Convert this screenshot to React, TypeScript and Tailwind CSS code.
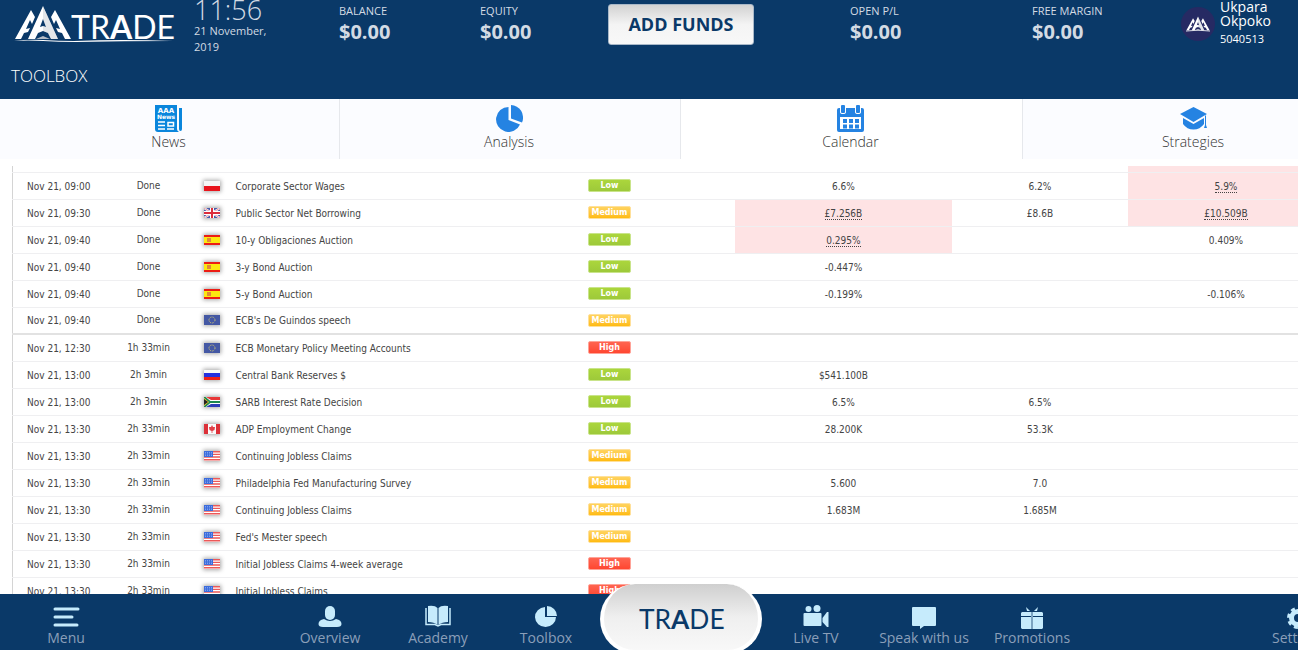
import React from 'react';

type Impact = 'Low' | 'Medium' | 'High';
type Country = 'pl' | 'gb' | 'es' | 'eu' | 'ru' | 'za' | 'ca' | 'us';

interface EventRow {
  time: string;
  status: string;
  country: Country;
  name: string;
  impact: Impact;
  actual?: string;
  consensus?: string;
  previous?: string;
  actualHot?: boolean;
  previousHot?: boolean;
  lastDone?: boolean;
}

const events: EventRow[] = [
  { time: 'Nov 21, 09:00', status: 'Done', country: 'pl', name: 'Corporate Sector Wages', impact: 'Low', actual: '6.6%', consensus: '6.2%', previous: '5.9%', previousHot: true },
  { time: 'Nov 21, 09:30', status: 'Done', country: 'gb', name: 'Public Sector Net Borrowing', impact: 'Medium', actual: '£7.256B', consensus: '£8.6B', previous: '£10.509B', actualHot: true, previousHot: true },
  { time: 'Nov 21, 09:40', status: 'Done', country: 'es', name: '10-y Obligaciones Auction', impact: 'Low', actual: '0.295%', previous: '0.409%', actualHot: true },
  { time: 'Nov 21, 09:40', status: 'Done', country: 'es', name: '3-y Bond Auction', impact: 'Low', actual: '-0.447%' },
  { time: 'Nov 21, 09:40', status: 'Done', country: 'es', name: '5-y Bond Auction', impact: 'Low', actual: '-0.199%', previous: '-0.106%' },
  { time: 'Nov 21, 09:40', status: 'Done', country: 'eu', name: "ECB's De Guindos speech", impact: 'Medium', lastDone: true },
  { time: 'Nov 21, 12:30', status: '1h 33min', country: 'eu', name: 'ECB Monetary Policy Meeting Accounts', impact: 'High' },
  { time: 'Nov 21, 13:00', status: '2h 3min', country: 'ru', name: 'Central Bank Reserves $', impact: 'Low', actual: '$541.100B' },
  { time: 'Nov 21, 13:00', status: '2h 3min', country: 'za', name: 'SARB Interest Rate Decision', impact: 'Low', actual: '6.5%', consensus: '6.5%' },
  { time: 'Nov 21, 13:30', status: '2h 33min', country: 'ca', name: 'ADP Employment Change', impact: 'Low', actual: '28.200K', consensus: '53.3K' },
  { time: 'Nov 21, 13:30', status: '2h 33min', country: 'us', name: 'Continuing Jobless Claims', impact: 'Medium' },
  { time: 'Nov 21, 13:30', status: '2h 33min', country: 'us', name: 'Philadelphia Fed Manufacturing Survey', impact: 'Medium', actual: '5.600', consensus: '7.0' },
  { time: 'Nov 21, 13:30', status: '2h 33min', country: 'us', name: 'Continuing Jobless Claims', impact: 'Medium', actual: '1.683M', consensus: '1.685M' },
  { time: 'Nov 21, 13:30', status: '2h 33min', country: 'us', name: "Fed's Mester speech", impact: 'Medium' },
  { time: 'Nov 21, 13:30', status: '2h 33min', country: 'us', name: 'Initial Jobless Claims 4-week average', impact: 'High' },
  { time: 'Nov 21, 13:30', status: '2h 33min', country: 'us', name: 'Initial Jobless Claims', impact: 'High' },
];

const impactStyles: Record<Impact, string> = {
  Low: 'bg-linear-to-b from-[#abd63c] to-[#9dc93a] border-[#c9e48a]',
  Medium: 'bg-linear-to-b from-[#ffd35c] to-[#ffbb0a] border-[#ffe09a]',
  High: 'bg-linear-to-b from-[#ff6450] to-[#ff4630] border-[#ffa398]',
};

function Peaks() {
  return (
    <g>
      <g fill="#fff">
        <path d="M17 5 L1 34 H7 L10 28 L14 27 L16 23 L12 24 L16 15 L18 19 L21 12 Z" />
        <path d="M41 5 L57 34 H51 L48 28 L44 27 L42 23 L46 24 L42 15 L40 19 L37 12 Z" />
        <path d="M29 1 L14 34 H21 L24 28 L29 26 L34 28 L37 34 H44 Z M29 14 L32 22 L29 21 L26 22 Z" fillRule="evenodd" />
      </g>
      <path d="M29 1 L44 34 H37 L34 28 L29 26 V21 L32 22 L29 14 Z" fill="#8f9aa8" opacity="0.25" />
      <path d="M29 31 L36 34 H22 Z" fill="#b4bcc6" />
    </g>
  );
}

function Wordmark() {
  return (
    <text y="29" fontFamily="Lato, sans-serif" fontSize="32" fill="currentColor">
      TR<tspan fontWeight="700">A</tspan>DE
    </text>
  );
}

function Logo() {
  return (
    <svg viewBox="0 0 164 38" className="h-[38px] w-[164px] overflow-visible text-white" role="img" aria-label="AAA Trade">
      <Peaks />
      <path d="M0 36 Q14 34 29 35 Q44 36 60 36 Q110 34 159 36 Q110 36 62 37 Q44 37 29 36 Q14 35 0 36 Z" fill="#fff" />
      <g transform="translate(57 5)">
        <Wordmark />
      </g>
    </svg>
  );
}

const flags: Record<Country, React.ReactNode> = {
  pl: (
    <>
      <rect width="16" height="10" fill="#f5f5f5" />
      <rect y="5" width="16" height="5" fill="#e8141c" />
    </>
  ),
  gb: (
    <>
      <rect width="16" height="10" fill="#4a5aa8" />
      <path d="M0 0 L16 10 M16 0 L0 10" stroke="#fff" strokeWidth="2" />
      <path d="M0 0 L16 10 M16 0 L0 10" stroke="#d8505c" strokeWidth="0.6" />
      <path d="M8 0 V10 M0 5 H16" stroke="#fff" strokeWidth="4" />
      <path d="M8 0 V10 M0 5 H16" stroke="#dc2c3c" strokeWidth="2" />
    </>
  ),
  es: (
    <>
      <rect width="16" height="10" fill="#ec1c14" />
      <rect y="2" width="16" height="6" fill="#fce810" />
      <rect x="3" y="3" width="4" height="4" fill="#e08838" />
    </>
  ),
  eu: (
    <>
      <rect width="16" height="10" fill="#4458a4" />
      <circle cx="8" cy="5" r="3" fill="none" stroke="#d8cc70" strokeWidth="1" strokeDasharray="1 0.9" />
    </>
  ),
  ru: (
    <>
      <rect width="16" height="10" fill="#f8f8f8" />
      <rect y="3" width="16" height="4" fill="#2430e0" />
      <rect y="7" width="16" height="3" fill="#ee2018" />
    </>
  ),
  za: (
    <>
      <rect width="16" height="10" fill="#fff" />
      <path d="M2 0 H16 V3 H7 Z" fill="#e83838" />
      <path d="M2 10 H16 V7 H7 Z" fill="#2c3cb8" />
      <path d="M0 0 L6 5 L0 10 M5 5 H16" fill="none" stroke="#1c8850" strokeWidth="2" />
      <path d="M0 1 L5 5 L0 9 Z" fill="#e8c020" />
      <path d="M0 2 L4 5 L0 8 Z" fill="#222" />
    </>
  ),
  ca: (
    <>
      <rect width="16" height="10" fill="#fafafa" />
      <rect width="4" height="10" fill="#dc3038" />
      <rect x="12" width="4" height="10" fill="#dc3038" />
      <path d="M8 1 L9 3 L11 3 L10.5 6 L8.4 7 V9 H7.6 V7 L5.5 6 L5 3 L7 3 Z" fill="#e04048" />
    </>
  ),
  us: (
    <>
      <rect width="16" height="10" fill="#fff" />
      <path d="M0 0.8 H16 M0 3.4 H16 M0 6 H16 M0 8.8 H16" stroke="#ec5858" strokeWidth="1.4" />
      <rect width="9" height="6" fill="#3c6cdc" />
      <path d="M1 1.5 H8 M1 3 H8 M1 4.5 H8" stroke="#a8c4f8" strokeWidth="0.6" strokeDasharray="1 1" />
    </>
  ),
};

function Flag({ country }: { country: Country }) {
  return (
    <svg
      viewBox="0 0 16 10"
      className="mx-auto h-[10px] w-4 shadow-[0_0_4px_1px_rgba(0,0,0,0.35)]"
      aria-hidden="true"
    >
      {flags[country]}
    </svg>
  );
}

function NewsIcon() {
  return (
    <svg viewBox="0 0 27 27" className="h-[27px] w-[27px]" aria-hidden="true">
      <path d="M0 0 H22 V24 Q22 26 24 27 H3 Q0 27 0 24 Z" fill="#0a86dc" />
      <path d="M24 3 H27 V24 Q27 26 25.5 26 Q24 26 24 24 Z" fill="#0a86dc" />
      <text x="11" y="8" textAnchor="middle" fontFamily="'DejaVu Sans', sans-serif" fontSize="7" fontWeight="700" fill="#fff">AAA</text>
      <text x="11" y="14" textAnchor="middle" fontFamily="'DejaVu Sans', sans-serif" fontSize="6" fontWeight="700" fill="#fff">News</text>
      <path d="M3 17 H10 M3 20.5 H10 M3 24 H10 M12 24 H19" stroke="#fff" strokeWidth="1.5" />
      <rect x="13" y="17.5" width="5.5" height="3.5" fill="none" stroke="#fff" strokeWidth="1.5" />
    </svg>
  );
}

function PieIcon() {
  return (
    <svg viewBox="0 0 27 27" className="h-[27px] w-[27px]" aria-hidden="true" fill="#2583e2">
      <path d="M12.5 2 V15 L24 19.5 A12.5 12.5 0 1 1 12.5 2 Z" />
      <path d="M15 0 A12.5 12.5 0 0 1 26 17.5 L15 13.5 Z" />
    </svg>
  );
}

function CalendarIcon() {
  return (
    <svg viewBox="0 0 27 27" className="h-[27px] w-[27px]" aria-hidden="true" fill="#2583e2">
      <rect x="4" y="0" width="4" height="8" rx="1" />
      <rect x="19" y="0" width="4" height="8" rx="1" />
      <path d="M2 3 H3 V7 Q3 9 6 9 Q9 9 9 7 V3 H18 V7 Q18 9 21 9 Q24 9 24 7 V3 H25 Q27 3 27 5 V25 Q27 27 25 27 H2 Q0 27 0 25 V5 Q0 3 2 3 Z M3 12 V24 H24 V12 Z" fillRule="evenodd" />
      <path d="M6 14 h4 v4 h-4 Z M12 14 h4 v4 h-4 Z M18 14 h4 v4 h-4 Z M6 19.5 h4 v4 h-4 Z M12 19.5 h4 v4 h-4 Z M18 19.5 h4 v4 h-4 Z" />
    </svg>
  );
}

function HatIcon() {
  return (
    <svg viewBox="0 0 27 27" className="h-[27px] w-[27px]" aria-hidden="true" fill="#2583e2">
      <path d="M13.5 2 L27 9 L13.5 17 L0 9 Z" />
      <path d="M3 13 L13.5 19 L24 13 V19 Q20 24.5 13.5 24.5 Q7 24.5 3 19 Z" />
      <path d="M25 10.5 H26 V20 L27 23 H24 L25 20 Z" />
    </svg>
  );
}

const tabs = [
  { label: 'News', icon: <NewsIcon />, active: false },
  { label: 'Analysis', icon: <PieIcon />, active: false },
  { label: 'Calendar', icon: <CalendarIcon />, active: true },
  { label: 'Strategies', icon: <HatIcon />, active: false },
];

// bottom bar glyphs, all on a 28x24 box
const navIcons = {
  menu: <path d="M3 4 H26 M3 12 H20 M3 20 H25" stroke="#c6ebfc" strokeWidth="3" strokeLinecap="round" />,
  overview: (
    <>
      <rect x="9" y="1" width="10" height="14" rx="5" />
      <path d="M8 14 Q14 18 20 14 Q25.5 15 25.5 19 Q25.5 22 21 22 H7 Q2.5 22 2.5 19 Q2.5 15 8 14 Z" />
    </>
  ),
  academy: (
    <>
      <path d="M4 1 Q11 0 13.5 3 V20 Q10 17 4 17 Z" />
      <path d="M24 1 Q17 0 14.5 3 V20 Q18 17 24 17 Z" />
      <path d="M2 3 V19.5 H11 L14 21 L17 19.5 H26 V3" fill="none" stroke="#c6ebfc" strokeWidth="1.5" />
    </>
  ),
  toolbox: (
    <>
      <path d="M13 2 V12 H24 A10.5 10 0 1 1 13 2 Z" />
      <path d="M15 1 A10 10 0 0 1 25 11 H15 Z" />
    </>
  ),
  tv: (
    <>
      <circle cx="6.5" cy="4" r="3" />
      <circle cx="15" cy="3.5" r="3.5" />
      <rect x="1.5" y="8" width="18" height="13" rx="1" />
      <path d="M20.5 13 L25 7 H26.5 V22 H25 L20.5 17 Z" />
    </>
  ),
  chat: <path d="M3 2 H25 Q26 2 26 3 V20 Q26 21 25 21 H14 L10 24 V21 H3 Q2 21 2 20 V3 Q2 2 3 2 Z" />,
  gift: (
    <>
      <path d="M8 2 L12 6 H9 Z M20 2 L16 6 H19 Z" />
      <path d="M4 7 H13 V11 H3 V8 Z M15 7 H24 L25 8 V11 H15 Z M3 12 H13 V24 H4 L3 23 Z M15 12 H25 V23 L24 24 H15 Z" />
      <path d="M13 7 H15 V24 H13 Z" opacity="0.6" />
    </>
  ),
  gear: (
    <>
      <circle cx="14" cy="13" r="6.5" fill="none" stroke="#c6ebfc" strokeWidth="5" />
      <circle cx="14" cy="13" r="9.5" fill="none" stroke="#c6ebfc" strokeWidth="3" strokeDasharray="4 3.46" />
    </>
  ),
};

function NavItem({ icon, label, width }: { icon: React.ReactNode; label: string; width: string }) {
  return (
    <button type="button" className={`flex flex-col items-center pt-[11px] text-sm leading-[18px] text-[#8b9fb9] ${width}`}>
      <svg viewBox="0 0 28 24" className="h-6 w-7" fill="#c6ebfc" aria-hidden="true">
        {icon}
      </svg>
      {label}
    </button>
  );
}

function Balance({ label, value }: { label: string; value: string }) {
  return (
    <div className="pt-[3px] text-[#d3dbe4]">
      <div className="text-[11px] leading-4">{label}</div>
      <div className="mt-px text-xl leading-6 font-bold">{value}</div>
    </div>
  );
}

function Value({ text, hot }: { text?: string; hot?: boolean }) {
  return (
    <td className={`pt-[2px] text-center ${hot ? 'bg-[#fee3e4]' : ''}`}>
      {text && <span className={hot ? 'border-b border-dotted border-[#444]' : ''}>{text}</span>}
    </td>
  );
}

function App() {
  return (
    <div className="h-screen w-full overflow-hidden bg-white font-['Open_Sans',sans-serif]">
      <div className="flex h-full w-full min-w-[1366px] flex-col">
        <header className="bg-[#0a3968]">
          <div className="grid h-14 grid-cols-[194fr_145fr_141fr_128fr_242fr_182fr_149fr_185fr] items-start">
            <div className="pt-[5px] pl-[14px]">
              <Logo />
            </div>
            <div className="text-[#d3dbe4]">
              <div className="text-[27px] leading-5 font-light">11:56</div>
              <div className="mt-[3px] w-24 text-[11px] leading-4">21 November, 2019</div>
            </div>
            <Balance label="BALANCE" value="$0.00" />
            <Balance label="EQUITY" value="$0.00" />
            <div className="pt-1">
              <button
                type="button"
                className="h-[41px] w-[146px] rounded-[3px] border border-[#a9b8c8] bg-linear-to-b from-[#d2d2d2] via-[#f4f4f4] to-[#f8f8f8] text-[18px] font-bold text-[#0a3968]"
              >
                ADD FUNDS
              </button>
            </div>
            <Balance label="OPEN P/L" value="$0.00" />
            <Balance label="FREE MARGIN" value="$0.00" />
            <div className="flex text-white">
              <div className="mt-[7px] mr-[5px] flex h-[34px] w-[34px] items-center justify-center rounded-full bg-[#262a63]">
                <svg viewBox="0 0 58 38" className="h-4 w-6" aria-hidden="true">
                  <Peaks />
                  <path d="M0 36 Q29 32 58 36" stroke="#fff" strokeWidth="2" fill="none" />
                </svg>
              </div>
              <div className="w-16">
                <div className="text-sm leading-[14px]">Ukpara Okpoko</div>
                <div className="mt-[3px] text-[11px] leading-4">5040513</div>
              </div>
            </div>
          </div>
          <h1 className="h-[43px] pt-2 pl-[11px] text-[17px] leading-6 font-light text-white">TOOLBOX</h1>
        </header>

        <nav className="grid grid-cols-[340fr_341fr_342fr_343fr]">
          {tabs.map((tab) => (
            <button
              key={tab.label}
              type="button"
              className={`flex h-[60px] flex-col items-center border-r border-[#e6e8ec] pt-[6px] pr-[2px] text-sm leading-5 font-light text-[#333] ${tab.active ? 'bg-white' : 'bg-[#fbfcff]'}`}
            >
              {tab.icon}
              {tab.label}
            </button>
          ))}
        </nav>

        <main className="min-h-0 flex-1 overflow-hidden pt-[7px] pl-3">
          <table className="w-full table-fixed border-l border-[#d4d4d4] font-['DejaVu_Sans_Condensed','DejaVu_Sans',sans-serif] text-[10px] leading-3 text-[#444]">
            <colgroup>
              <col className="w-[96px]" />
              <col className="w-[80px]" />
              <col className="w-[47px]" />
              <col />
              <col className="w-[147px]" />
              <col className="w-[217px]" />
              <col className="w-[176px]" />
              <col className="w-[196px]" />
              <col className="w-[42px]" />
            </colgroup>
            <tbody>
              <tr className="h-[6px] border-b border-[#efeff1]">
                <td colSpan={7}></td>
                <td className="bg-[#fee3e4]"></td>
                <td></td>
              </tr>
              {events.map((e, i) => (
                <tr
                  key={i}
                  className={`h-[27px] ${e.lastDone ? 'border-b-2 border-[#e2e2e2]' : 'border-b border-[#efeff1]'}`}
                >
                  <td className="pt-[2px] pl-[14px]">{e.time}</td>
                  <td className="text-center">{e.status}</td>
                  <td>
                    <Flag country={e.country} />
                  </td>
                  <td className="pt-[2px]">{e.name}</td>
                  <td>
                    <span className={`block h-[13px] w-[43px] rounded-[2px] border text-center font-['DejaVu_Sans',sans-serif] text-[8px] leading-[11px] font-bold text-white ${impactStyles[e.impact]}`}>
                      {e.impact}
                    </span>
                  </td>
                  <Value text={e.actual} hot={e.actualHot} />
                  <Value text={e.consensus} />
                  <Value text={e.previous} hot={e.previousHot} />
                  <td></td>
                </tr>
              ))}
            </tbody>
          </table>
        </main>

        <nav className="flex h-14 items-start justify-between bg-[#0a3968]">
          <NavItem icon={navIcons.menu} label="Menu" width="w-[132px]" />
          <div className="flex items-start">
            <NavItem icon={navIcons.overview} label="Overview" width="w-[108px]" />
            <NavItem icon={navIcons.academy} label="Academy" width="w-[108px]" />
            <NavItem icon={navIcons.toolbox} label="Toolbox" width="w-[108px]" />
            <button
              type="button"
              className="-mt-[10px] flex h-[70px] w-[162px] items-center justify-center rounded-[35px] border-x-4 border-b-4 border-white bg-linear-to-b from-[#cfcfcf] via-[#efefef] to-[#f8f8f8] pt-1 text-[#0a3968]"
            >
              <svg viewBox="0 0 102 34" className="h-7 w-[84px] overflow-visible" role="img" aria-label="Trade">
                <Wordmark />
              </svg>
            </button>
            <NavItem icon={navIcons.tv} label="Live TV" width="w-[108px]" />
            <NavItem icon={navIcons.chat} label="Speak with us" width="w-[108px]" />
            <NavItem icon={navIcons.gift} label="Promotions" width="w-[108px]" />
          </div>
          <NavItem icon={navIcons.gear} label="Settings" width="w-[136px]" />
        </nav>
      </div>
    </div>
  );
}

export default App;
